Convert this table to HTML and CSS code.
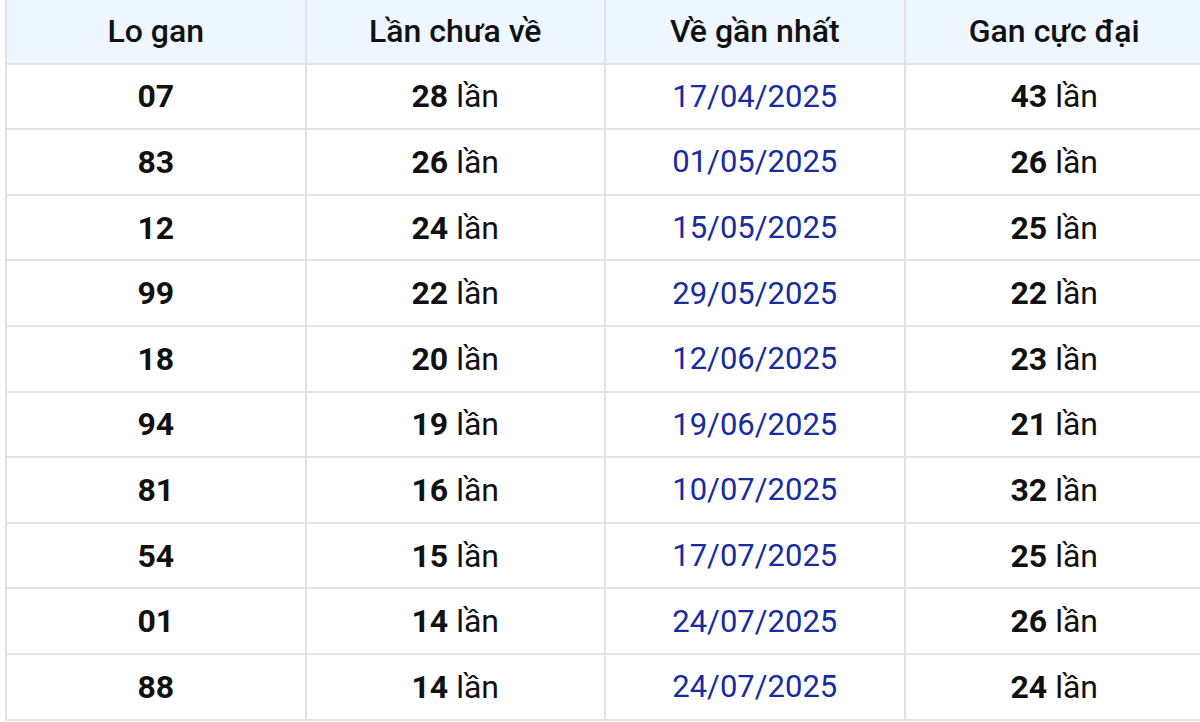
FILE: index.html
```html
<!DOCTYPE html>
<html lang="vi">
<head>
<meta charset="utf-8">
<title>Lo gan</title>
<link rel="stylesheet" href="styles.css">
</head>
<body>
<table class="gan-table">
  <thead>
    <tr>
      <th>Lo gan</th>
      <th>Lần chưa về</th>
      <th>Về gần nhất</th>
      <th>Gan cực đại</th>
    </tr>
  </thead>
  <tbody>
    <tr><td class="num">07</td><td><b>28</b> lần</td><td class="date">17/04/2025</td><td><b>43</b> lần</td></tr>
    <tr><td class="num">83</td><td><b>26</b> lần</td><td class="date">01/05/2025</td><td><b>26</b> lần</td></tr>
    <tr><td class="num">12</td><td><b>24</b> lần</td><td class="date">15/05/2025</td><td><b>25</b> lần</td></tr>
    <tr><td class="num">99</td><td><b>22</b> lần</td><td class="date">29/05/2025</td><td><b>22</b> lần</td></tr>
    <tr><td class="num">18</td><td><b>20</b> lần</td><td class="date">12/06/2025</td><td><b>23</b> lần</td></tr>
    <tr><td class="num">94</td><td><b>19</b> lần</td><td class="date">19/06/2025</td><td><b>21</b> lần</td></tr>
    <tr><td class="num">81</td><td><b>16</b> lần</td><td class="date">10/07/2025</td><td><b>32</b> lần</td></tr>
    <tr><td class="num">54</td><td><b>15</b> lần</td><td class="date">17/07/2025</td><td><b>25</b> lần</td></tr>
    <tr><td class="num">01</td><td><b>14</b> lần</td><td class="date">24/07/2025</td><td><b>26</b> lần</td></tr>
    <tr><td class="num">88</td><td><b>14</b> lần</td><td class="date">24/07/2025</td><td><b>24</b> lần</td></tr>
  </tbody>
</table>
</body>
</html>
```

FILE: styles.css
```css
html, body {
  margin: 0;
  padding: 0;
  background: #ffffff;
  overflow: hidden;
}

body {
  font-family: Roboto, "Noto Sans", "Liberation Sans", sans-serif;
  color: #111111;
}

.gan-table {
  border-collapse: collapse;
  table-layout: fixed;
  width: 1200px;
  margin: -2px 0 0 5px;
  border: 2px solid #e2e2e2;
}

.gan-table th,
.gan-table td {
  border: 2px solid #e2e2e2;
  text-align: center;
  vertical-align: middle;
  padding: 0;
  height: 63.6px;
}

.gan-table th {
  background: #eef6ff;
  font-weight: 500;
  font-size: 32px;
  color: #111111;
  height: 62.6px;
}

.gan-table td {
  font-size: 32px;
  font-weight: 400;
  color: #111111;
}

.gan-table td b,
.gan-table td.num {
  font-weight: 700;
}

.gan-table td.date {
  font-size: 31px;
  color: #172c9e;
}
```
